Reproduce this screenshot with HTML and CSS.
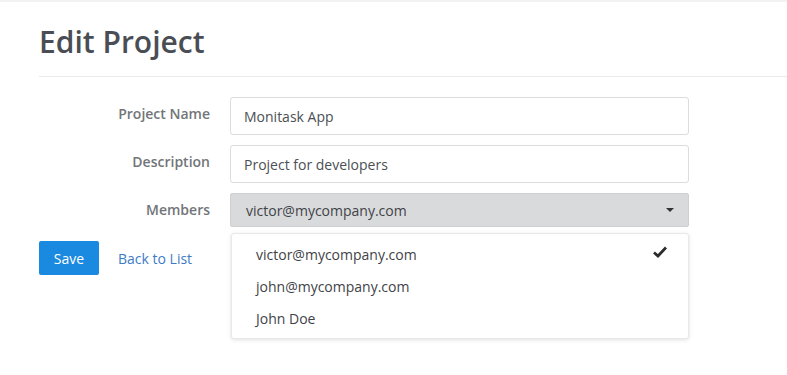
FILE: index.html
```html
<!DOCTYPE html>
<html lang="en">
<head>
    <meta charset="UTF-8">
    <meta name="viewport" content="width=device-width, initial-scale=1.0">
    <title>Edit Project</title>
    <link rel="stylesheet" href="styles.css">
</head>
<body>
    <div class="page">
        <h1 class="title">Edit Project</h1>

        <form class="form">
            <div class="row">
                <label class="label">Project Name</label>
                <input class="field" type="text" value="Monitask App">
            </div>
            <div class="row">
                <label class="label">Description</label>
                <input class="field" type="text" value="Project for developers">
            </div>
            <div class="row">
                <label class="label">Members</label>
                <div class="select">
                    <span>victor@mycompany.com</span>
                    <span class="caret"></span>
                </div>
            </div>
            <div class="actions">
                <button class="save" type="button">Save</button>
                <a class="back" href="#">Back to List</a>
            </div>

            <div class="menu">
                <div class="item">
                    <span>victor@mycompany.com</span>
                    <svg class="check" width="14" height="12" viewBox="0 0 14 12"><path d="M1 6.5 L5 10 L13 1.5" fill="none" stroke="#2b2b2b" stroke-width="2.8"></path></svg>
                </div>
                <div class="item"><span>john@mycompany.com</span></div>
                <div class="item"><span>John Doe</span></div>
            </div>
        </form>
    </div>
</body>
</html>
```

FILE: styles.css
```css
*{
    margin: 0px;
    padding: 0px;
    box-sizing: border-box;
}
body{
    font-family: "Open Sans", sans-serif;
    color: #4b4f54;
    background: #fff;
    border-top: 2px solid #f2f2f2;
    min-height: 375px;
}
.page{
    padding-left: 39px;
    min-height: 360px;
}
.title{
    font-size: 30px;
    font-weight: 600;
    color: #4a4e54;
    line-height: 40px;
    padding-top: 20px;
    padding-bottom: 14px;
    border-bottom: 1px solid #eaeaea;
}
.form{
    position: relative;
    padding-top: 20px;
    width: 650px;
    min-height: 270px;
}
.row{
    display: flex;
    align-items: flex-start;
    margin-bottom: 10px;
}
.label{
    width: 171px;
    text-align: right;
    font-size: 14px;
    font-weight: 600;
    color: #727579;
    padding-top: 7px;
}
.field{
    margin-left: 20px;
    width: 459px;
    height: 38px;
    border: 1px solid #dcdcdc;
    border-radius: 3px;
    padding: 0 13px;
    font-family: "Open Sans", sans-serif;
    font-size: 14px;
    color: #4b4f54;
}
.select{
    margin-left: 20px;
    width: 459px;
    height: 34px;
    background: #d9dadb;
    border: 1px solid #cfd0d1;
    border-radius: 2px;
    display: flex;
    align-items: center;
    justify-content: space-between;
    padding: 0 14px 0 15px;
    font-size: 14px;
    color: #3f4348;
}
.caret{
    width: 0;
    height: 0;
    border-left: 4px solid transparent;
    border-right: 4px solid transparent;
    border-top: 4px solid #333;
}
.actions{
    display: flex;
    align-items: center;
    margin-top: 14px;
}
.save{
    width: 60px;
    height: 34px;
    background: #1a8ae0;
    color: #fff;
    border: none;
    border-radius: 2px;
    font-family: "Open Sans", sans-serif;
    font-size: 14px;
}
.back{
    margin-left: 19px;
    font-size: 14px;
    color: #3d7cc4;
    text-decoration: none;
}
.menu{
    position: absolute;
    left: 192px;
    top: 156px;
    width: 458px;
    background: #fff;
    border: 1px solid #e8e8e8;
    border-radius: 3px;
    box-shadow: 0 1px 4px rgba(0,0,0,0.12);
    padding: 4px 0 4px;
}
.item{
    display: flex;
    justify-content: space-between;
    align-items: center;
    height: 32px;
    padding: 0 21px 0 24px;
    font-size: 14px;
    color: #3f4348;
}
.check{
    margin-top: -4px;
}
```
